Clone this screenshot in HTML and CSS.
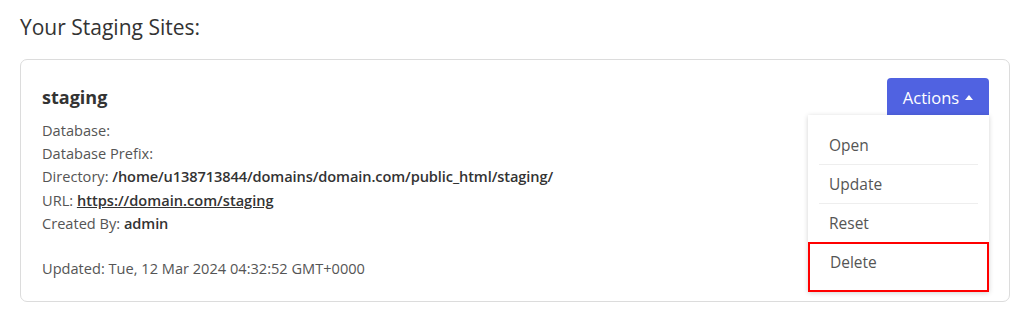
FILE: index.html
```html
<!DOCTYPE html>
<html>
<head>
<meta charset="utf-8">
<link rel="stylesheet" href="styles.css">
</head>
<body>
<div class="page">
  <h2 class="title">Your Staging Sites:</h2>
  <div class="card">
    <div class="info">
      <h3 class="name">staging</h3>
      <div class="line">Database:</div>
      <div class="line">Database Prefix:</div>
      <div class="line">Directory: <b>/home/u138713844/domains/domain.com/public_html/staging/</b></div>
      <div class="line">URL: <a class="link" href="#">https://domain.com/staging</a></div>
      <div class="line">Created By: <b>admin</b></div>
      <div class="line updated">Updated: Tue, 12 Mar 2024 04:32:52 GMT+0000</div>
    </div>
    <div class="actions">
      <button class="btn">Actions <span class="caret"></span></button>
      <ul class="menu">
        <li class="item">Open</li>
        <li class="item">Update</li>
        <li class="item">Reset</li>
        <li class="item delete">Delete</li>
      </ul>
    </div>
  </div>
</div>
</body>
</html>
```
FILE: styles.css
```css
* { box-sizing: border-box; }
html, body { margin: 0; padding: 0; background: #fff; }
body {
  font-family: "Open Sans", "Noto Sans", sans-serif;
  color: #555;
  width: 1024px;
  height: 316px;
  overflow: hidden;
}
.page { padding: 13px 14px 0 20px; }
.title {
  margin: 0 0 18px 0;
  font-size: 21px;
  font-weight: 500;
  color: #333;
  line-height: 28px;
}
.card {
  border: 1px solid #dcdcdc;
  border-radius: 7px;
  height: 243px;
  display: flex;
  justify-content: space-between;
  padding: 18px 20px 0 21px;
  position: relative;
}
.name {
  margin: 7px 0 10px 0;
  font-size: 18px;
  font-weight: 700;
  color: #333;
  line-height: 24px;
}
.line {
  font-size: 14.6px;
  line-height: 23.2px;
}
.line b { color: #333; font-weight: 600; letter-spacing: -0.1px; }
.link { color: #333; font-weight: 600; text-decoration: underline; }
.updated { margin-top: 22px; }
.actions {
  position: relative;
  display: flex;
  flex-direction: column;
  align-items: flex-end;
}
.btn {
  font-family: inherit;
  background: #5062e1;
  color: #fff;
  border: none;
  border-radius: 4px 4px 0 0;
  width: 102px;
  height: 37px;
  font-size: 16.5px;
  padding: 2px 0 0 0;
  display: flex;
  align-items: center;
  justify-content: center;
  gap: 6px;
}
.caret {
  width: 0; height: 0;
  border-left: 4.5px solid transparent;
  border-right: 4.5px solid transparent;
  border-bottom: 5px solid #fff;
}
.menu {
  list-style: none;
  margin: 0;
  padding: 11px 0 0 0;
  width: 181px;
  background: #fff;
  box-shadow: 0 1px 5px rgba(0,0,0,0.18);
  font-size: 15.5px;
  color: #555;
}
.item {
  height: 39px;
  line-height: 39px;
  margin: 0 11px 0 11px;
  padding-left: 10px;
  border-bottom: 1px solid #eeeeee;
}
.item.delete {
  margin: -1px 0 0 0;
  padding-left: 20px;
  height: 50px;
  line-height: 36px;
  border: 2px solid #f00;
}
```
